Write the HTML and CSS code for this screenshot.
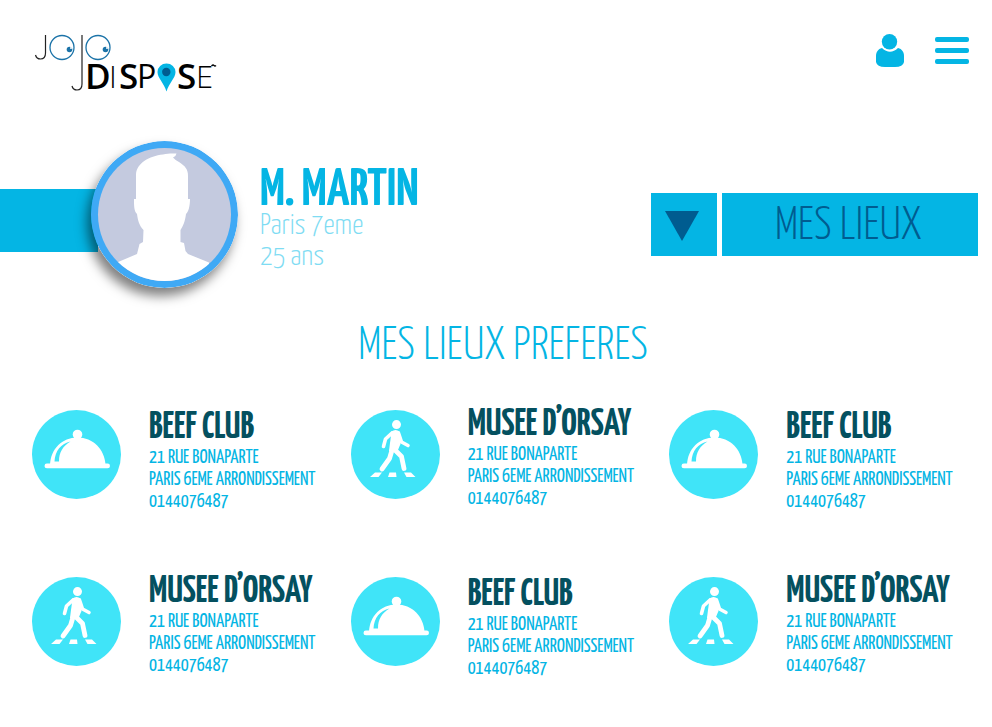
FILE: index.html
```html
<!DOCTYPE html>
<html lang="fr">
<head>
<meta charset="utf-8">
<title>Jojo Dispose – Mes lieux</title>
<link rel="stylesheet" href="styles.css">
</head>
<body>
<svg class="sprite" aria-hidden="true">
  <symbol id="cloche" viewBox="0 0 89 89">
    <circle cx="44.500" cy="44.500" r="44.500" fill="#40e4f8"/>
    <circle cx="45.500" cy="24.500" r="4.800" fill="#fff"/>
    <path d="M18 55C18.500 39 30 27.500 45.500 27.500S72.500 39 73.500 55Z" fill="#fff"/>
    <rect x="12.500" y="53.500" width="65.500" height="4.800" rx="2.400" fill="#fff"/>
    <path d="M22.500 51.500C23 41 29 33.500 38.500 31.500C31 36 27 42 27 51.500Z" fill="#40e4f8"/>
  </symbol>
  <symbol id="pieton" viewBox="0 0 89 89">
    <circle cx="44.500" cy="44.500" r="44.500" fill="#40e4f8"/>
    <circle cx="45.500" cy="14.600" r="4.500" fill="#fff"/>
    <path d="M40.500 21.500Q44.500 18.500 48.500 21.500L49.500 34L46.500 41L38 41Z" fill="#fff"/>
    <g fill="none" stroke="#fff" stroke-linecap="round" stroke-linejoin="round">
      <path d="M41 23L34.500 29L32.500 36.500" stroke-width="3.600"/>
      <path d="M47.500 23L50.500 32L57 35.500" stroke-width="3.600"/>
      <path d="M41.500 38.500L38.500 48.500L31 59" stroke-width="4.800"/>
      <path d="M43 39L50.500 46.500L53 58.500" stroke-width="4.800"/>
    </g>
    <path d="M24 62.500H31L27.500 67H19ZM38.500 62.500H45L45.500 67H37ZM53 62.500H60L64.500 67H55.500Z" fill="#fff"/>
  </symbol>
</svg>

<header class="topbar">
  <a class="logo" href="#" aria-label="Jojo Dispose">
    <svg width="190" height="70" viewBox="34 34 190 70">
      <g fill="none" stroke="#222" stroke-width="1.200">
        <path d="M45.500 35V53Q45.500 59 40.500 59Q36.500 59 35.500 55"/>
        <path d="M82 35V84Q82 90 77 90Q73 90 72 86"/>
      </g>
      <g fill="none" stroke="#1b73a8" stroke-width="1.300">
        <circle cx="62" cy="47.500" r="12"/>
        <circle cx="98" cy="47.500" r="12"/>
      </g>
      <g fill="#1b73a8">
        <circle cx="69.500" cy="49.500" r="2.800"/>
        <circle cx="105.500" cy="49.500" r="2.800"/>
      </g>
      <g fill="#fff">
        <circle cx="71" cy="48" r="1"/>
        <circle cx="107" cy="48" r="1"/>
      </g>
      <text class="logo-bold" y="89"><tspan x="85">D</tspan><tspan x="119">S</tspan><tspan x="177">S</tspan></text>
      <text class="logo-regular" x="137" y="88">P</text>
      <text class="logo-light" y="88"><tspan x="109">I</tspan><tspan x="196">E</tspan></text>
      <path d="M166.500 91.500C164 83 157.500 78 157.500 72A9 8.500 0 0 1 175.500 72C175.500 78 169 83 166.500 91.500Z" fill="#04b5e4"/>
      <circle cx="166.300" cy="72" r="4.200" fill="#005c90"/>
      <path d="M211.500 66Q213 64.500 214 65.500T216 65.500" fill="none" stroke="#000" stroke-width="1.400"/>
    </svg>
  </a>
  <nav class="tools">
    <button class="tool" type="button" aria-label="Mon compte">
      <svg width="28" height="34" viewBox="0 0 28 34" fill="#04b5e4">
        <path d="M6 14Q14 21.500 22 14C26 15 28 18 28 22V28Q27 33 19 33H9Q1 33 0 28V22C0 18 2 15 6 14Z"/>
        <circle cx="13.500" cy="7.700" r="7.700"/>
      </svg>
    </button>
    <button class="tool" type="button" aria-label="Menu">
      <svg width="34" height="34" viewBox="0 0 34 34" fill="#04b5e4">
        <rect y="3" width="34" height="5" rx="2"/>
        <rect y="14" width="34" height="5" rx="2"/>
        <rect y="25" width="34" height="5" rx="2"/>
      </svg>
    </button>
  </nav>
</header>

<main>
  <section class="profile">
    <div class="ribbon"></div>
    <svg class="avatar" viewBox="0 0 147 147" role="img" aria-label="Photo de profil">
      <clipPath id="disc"><circle cx="73.500" cy="73.500" r="66.500"/></clipPath>
      <circle cx="73.500" cy="73.500" r="73.500" fill="#3fa9f5"/>
      <circle cx="73.500" cy="73.500" r="66.500" fill="#c4cadf"/>
      <path clip-path="url(#disc)" fill="#fff" d="M45 58V33C46 22 58 15 72 13.500C78 12 82 12.500 85.500 12.500Q85 15.500 82 16.500Q84 19 88 21C94 25 97 28 97 35V58H99C99 65 97.500 71 95 73C94 81 92 85 89.500 89V101L93 102L94.500 110L97 113L118 121.500V147H26V121.500L46 113L48.500 103L52 101L52.500 89C48 84 47 80 46 73C43 70 43 65 43 58Z"/>
    </svg>
    <div class="identity">
      <h1>M. MARTIN</h1>
      <p>Paris 7eme</p>
      <p>25 ans</p>
    </div>
    <div class="picker">
      <button class="picker-arrow" type="button" aria-label="Dérouler la liste">
        <svg width="34" height="30" viewBox="0 0 34 30"><path d="M0 0H34L17 30Z" fill="#005c90"/></svg>
      </button>
      <button class="picker-label" type="button">MES LIEUX</button>
    </div>
  </section>

  <h2>MES LIEUX PREFERES</h2>

  <ul class="places">
    <li class="place">
      <svg class="badge" aria-hidden="true"><use href="#cloche"/></svg>
      <div class="details"><h3>BEEF CLUB</h3><p>21 RUE BONAPARTE<br>PARIS 6EME ARRONDISSEMENT<br>0144076487</p></div>
    </li>
    <li class="place place-walk">
      <svg class="badge" aria-hidden="true"><use href="#pieton"/></svg>
      <div class="details"><h3>MUSEE D’ORSAY</h3><p>21 RUE BONAPARTE<br>PARIS 6EME ARRONDISSEMENT<br>0144076487</p></div>
    </li>
    <li class="place">
      <svg class="badge" aria-hidden="true"><use href="#cloche"/></svg>
      <div class="details"><h3>BEEF CLUB</h3><p>21 RUE BONAPARTE<br>PARIS 6EME ARRONDISSEMENT<br>0144076487</p></div>
    </li>
    <li class="place place-walk">
      <svg class="badge" aria-hidden="true"><use href="#pieton"/></svg>
      <div class="details"><h3>MUSEE D’ORSAY</h3><p>21 RUE BONAPARTE<br>PARIS 6EME ARRONDISSEMENT<br>0144076487</p></div>
    </li>
    <li class="place">
      <svg class="badge" aria-hidden="true"><use href="#cloche"/></svg>
      <div class="details"><h3>BEEF CLUB</h3><p>21 RUE BONAPARTE<br>PARIS 6EME ARRONDISSEMENT<br>0144076487</p></div>
    </li>
    <li class="place place-walk">
      <svg class="badge" aria-hidden="true"><use href="#pieton"/></svg>
      <div class="details"><h3>MUSEE D’ORSAY</h3><p>21 RUE BONAPARTE<br>PARIS 6EME ARRONDISSEMENT<br>0144076487</p></div>
    </li>
  </ul>
</main>
</body>
</html>
```
FILE: styles.css
```css
* { box-sizing: border-box; margin: 0; padding: 0; }

body {
  background: #fff;
  color: #04b5e4;
  font-family: "Yanone Kaffeesatz", "Roboto Condensed", sans-serif;
}

button { border: 0; background: none; color: inherit; font: inherit; cursor: pointer; }
svg { display: block; }
.sprite { display: none; }

.topbar {
  display: flex;
  justify-content: space-between;
  align-items: flex-start;
  padding: 34px 23px 0 34px;
}
.logo svg { overflow: visible; }
.logo text { font-family: "Open Sans", sans-serif; fill: #000; }
.logo .logo-bold { font-weight: 600; font-size: 35px; }
.logo .logo-regular { font-weight: 400; font-size: 32px; }
.logo .logo-light { font-weight: 300; font-size: 31px; }
.tools { display: flex; gap: 31px; }

.profile {
  display: flex;
  align-items: flex-start;
  padding: 37px 14px 0 0;
}
.ribbon { width: 98px; height: 63px; margin-top: 48px; background: #04b5e4; }
.avatar {
  position: relative;
  flex: none;
  width: 147px;
  height: 147px;
  margin-left: -7px;
  border-radius: 50%;
  box-shadow: -4px 8px 12px rgba(0, 0, 0, .5);
}
.identity { margin: 30px 0 0 22px; font-size: 29px; font-weight: 300; line-height: 31px; }
.identity h1 { font-size: 52px; font-weight: 700; line-height: 40px; }
.identity p { color: #7fdcf3; }

.picker { display: flex; gap: 5px; height: 63px; margin: 52px 0 0 auto; }
.picker-arrow {
  display: flex;
  width: 66px;
  padding: 18px 14px;
  background: #04b5e4;
}
.picker-label {
  width: 256px;
  padding: 4px 4px 0 0;
  background: #04b5e4;
  color: #005c90;
  font-size: 47px;
  font-weight: 300;
  line-height: 59px;
}

h2 {
  margin-top: 28px;
  padding-left: 14px;
  font-size: 47px;
  font-weight: 300;
  line-height: 60px;
  text-align: center;
}

.places {
  display: grid;
  grid-template-columns: repeat(3, 1fr);
  row-gap: 55px;
  margin-top: 34px;
  padding: 0 4px 24px 32px;
  list-style: none;
}
.place { display: flex; align-items: flex-start; gap: 28px; height: 112px; }
.badge { flex: none; width: 89px; height: 89px; }
.place-walk .details { margin-top: -3px; }
.details h3 { color: #04505f; font-size: 38px; font-weight: 700; line-height: 37px; }
.details p { font-size: 19px; line-height: 22px; }
```
